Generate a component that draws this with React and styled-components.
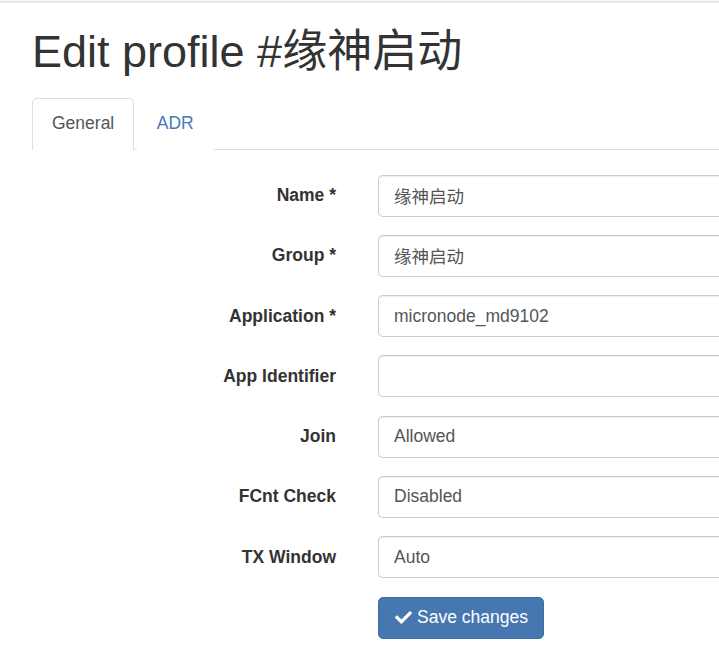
import React from "react"
import styled, { createGlobalStyle } from "styled-components"
import { FaCheck } from "react-icons/fa"

const GlobalStyle = createGlobalStyle`
    html, body {
        margin: 0;
        padding: 0;
        background: #fff;
        overflow: hidden;
    }
    body {
        font-family: "Liberation Sans", Arial, "Noto Sans CJK SC", sans-serif;
        font-size: 17.5px;
        color: #333;
    }
`

const TopBar = styled.div`
    height: 3px;
    border-top: 1px solid #f4f4f4;
    background: #e9e9e9;
    box-sizing: border-box;
`
const Page = styled.div`
    padding: 0 0 0 32px;
`
const Title = styled.h1`
    margin: 24px 0 21px 0;
    font-size: 45px;
    font-weight: 400;
    line-height: 1.1;
    color: #333;
`
const Tabs = styled.ul`
    list-style: none;
    display: flex;
    margin: 0;
    padding: 0;
    border-bottom: 1px solid #ddd;
`
const Tab = styled.li`
    margin: 0 2.5px -1px 0;
    padding: 12.5px 19px;
    line-height: 25px;
    border: 1px solid ${props => props.active ? "#ddd" : "transparent"};
    border-bottom-color: ${props => props.active ? "#fff" : "transparent"};
    border-radius: 5px 5px 0 0;
    background: #fff;
    color: ${props => props.active ? "#555" : "#4a7ab5"};
`
const Form = styled.form`
    display: grid;
    grid-template-columns: 304px 1fr;
    column-gap: 42px;
    row-gap: 18.3px;
    align-items: center;
    margin-top: 25px;
`
const Label = styled.label`
    text-align: right;
    font-weight: 700;
    color: #333;
`
/* the inputs run on past the right edge of the window */
const Input = styled.div`
    box-sizing: border-box;
    height: 42px;
    padding: 0 15px;
    display: flex;
    align-items: center;
    border: 1px solid #ccc;
    border-right: 0;
    border-radius: 5px 0 0 5px;
    box-shadow: inset 0 1px 1px rgba(0, 0, 0, 0.075);
    color: #555;
    font-size: 17.5px;
`
const Button = styled.button`
    grid-column: 2;
    justify-self: start;
    display: flex;
    align-items: center;
    gap: 5px;
    height: 42px;
    padding: 0 15px 0 16px;
    border: 1px solid #3f6ea6;
    border-radius: 5px;
    background: #4677b1;
    color: #fff;
    font-family: "Liberation Sans", Arial, sans-serif;
    font-size: 17.5px;
`

const fields = [
    { label: "Name *", value: "缘神启动" },
    { label: "Group *", value: "缘神启动" },
    { label: "Application *", value: "micronode_md9102" },
    { label: "App Identifier", value: "" },
    { label: "Join", value: "Allowed" },
    { label: "FCnt Check", value: "Disabled" },
    { label: "TX Window", value: "Auto" }
]

export default function App() {
    return (
        <>
            <GlobalStyle />
            <TopBar />
            <Page>
                <Title>Edit profile #缘神启动</Title>
                <Tabs>
                    <Tab active>General</Tab>
                    <Tab>ADR</Tab>
                </Tabs>
                <Form>
                    {
                        fields.map((field) => {
                            return (
                                <React.Fragment key={field.label}>
                                    <Label>{field.label}</Label>
                                    <Input>{field.value}</Input>
                                </React.Fragment>
                            )
                        })
                    }
                    <Button type="button">
                        <FaCheck size={17} />
                        Save changes
                    </Button>
                </Form>
            </Page>
        </>
    )
}
